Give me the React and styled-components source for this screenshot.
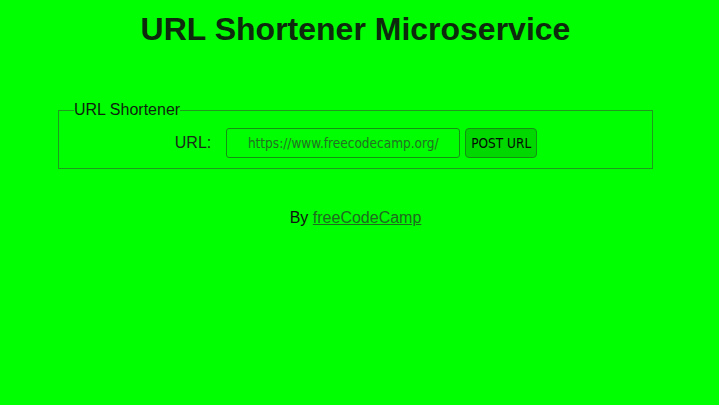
import styled, { createGlobalStyle } from "styled-components";

const GlobalStyle = createGlobalStyle`
  html, body {
    margin: 0;
    padding: 0;
    background: #00ff00;
  }
  body {
    font-family: "Liberation Sans", Arial, sans-serif;
    color: #111;
  }
`;

function App() {
  return (
    <>
      <GlobalStyle />
      <Page>
        <Title>URL Shortener Microservice</Title>
        <Form onSubmit={(e) => e.preventDefault()}>
          <Fieldset>
            <Legend>URL Shortener</Legend>
            <Row>
              <Label htmlFor="url_input">URL:</Label>
              <Input
                id="url_input"
                type="text"
                placeholder="https://www.freecodecamp.org/"
              />
              <Button type="submit">POST URL</Button>
            </Row>
          </Fieldset>
        </Form>
        <Footer>
          By <Link href="#">freeCodeCamp</Link>
        </Footer>
      </Page>
    </>
  );
}

export default App;

// Styled Components

const Page = styled.div`
  width: 711px;
  min-height: 405px;
  display: flex;
  flex-direction: column;
  align-items: stretch;
`;

const Title = styled.h1`
  margin: 11px 0 0;
  text-align: center;
  font-size: 32px;
  font-weight: bold;
  color: #0d2a0d;
`;

const Form = styled.form`
  margin: 53px 58px 0 58px;
`;

const Fieldset = styled.fieldset`
  margin: 0;
  padding: 9px 0 10px;
  border: 1px solid #1f9a1f;
  display: flex;
  justify-content: center;
`;

const Legend = styled.legend`
  margin-left: 15px;
  padding: 0;
  font-size: 16px;
  color: #0f1f0f;
`;

const Row = styled.div`
  display: flex;
  align-items: center;
  justify-content: center;
  width: 100%;
  padding-left: 1px;
`;

const Label = styled.label`
  font-size: 16px;
  color: #1a2a1a;
  margin-right: 15px;
`;

const Input = styled.input`
  width: 234px;
  height: 30px;
  box-sizing: border-box;
  border: 1px solid #159015;
  border-radius: 3px;
  background: #00ff00;
  text-align: center;
  font-family: "DejaVu Sans Condensed", "Liberation Sans Narrow", sans-serif;
  font-size: 13.5px;
  outline: none;

  &::placeholder {
    color: #237023;
  }
`;

const Button = styled.button`
  margin-left: 5px;
  width: 72px;
  height: 30px;
  box-sizing: border-box;
  border: 1px solid #159015;
  border-radius: 4px;
  background: #00d800;
  color: #050d05;
  font-family: "DejaVu Sans Condensed", "Liberation Sans Narrow", sans-serif;
  font-size: 13.5px;
  padding: 0;
  cursor: pointer;
`;

const Footer = styled.p`
  margin: 40px 0 0;
  text-align: center;
  font-size: 16px;
  color: #111;
`;

const Link = styled.a`
  color: #1f6a1f;
  text-decoration: underline;
`;
